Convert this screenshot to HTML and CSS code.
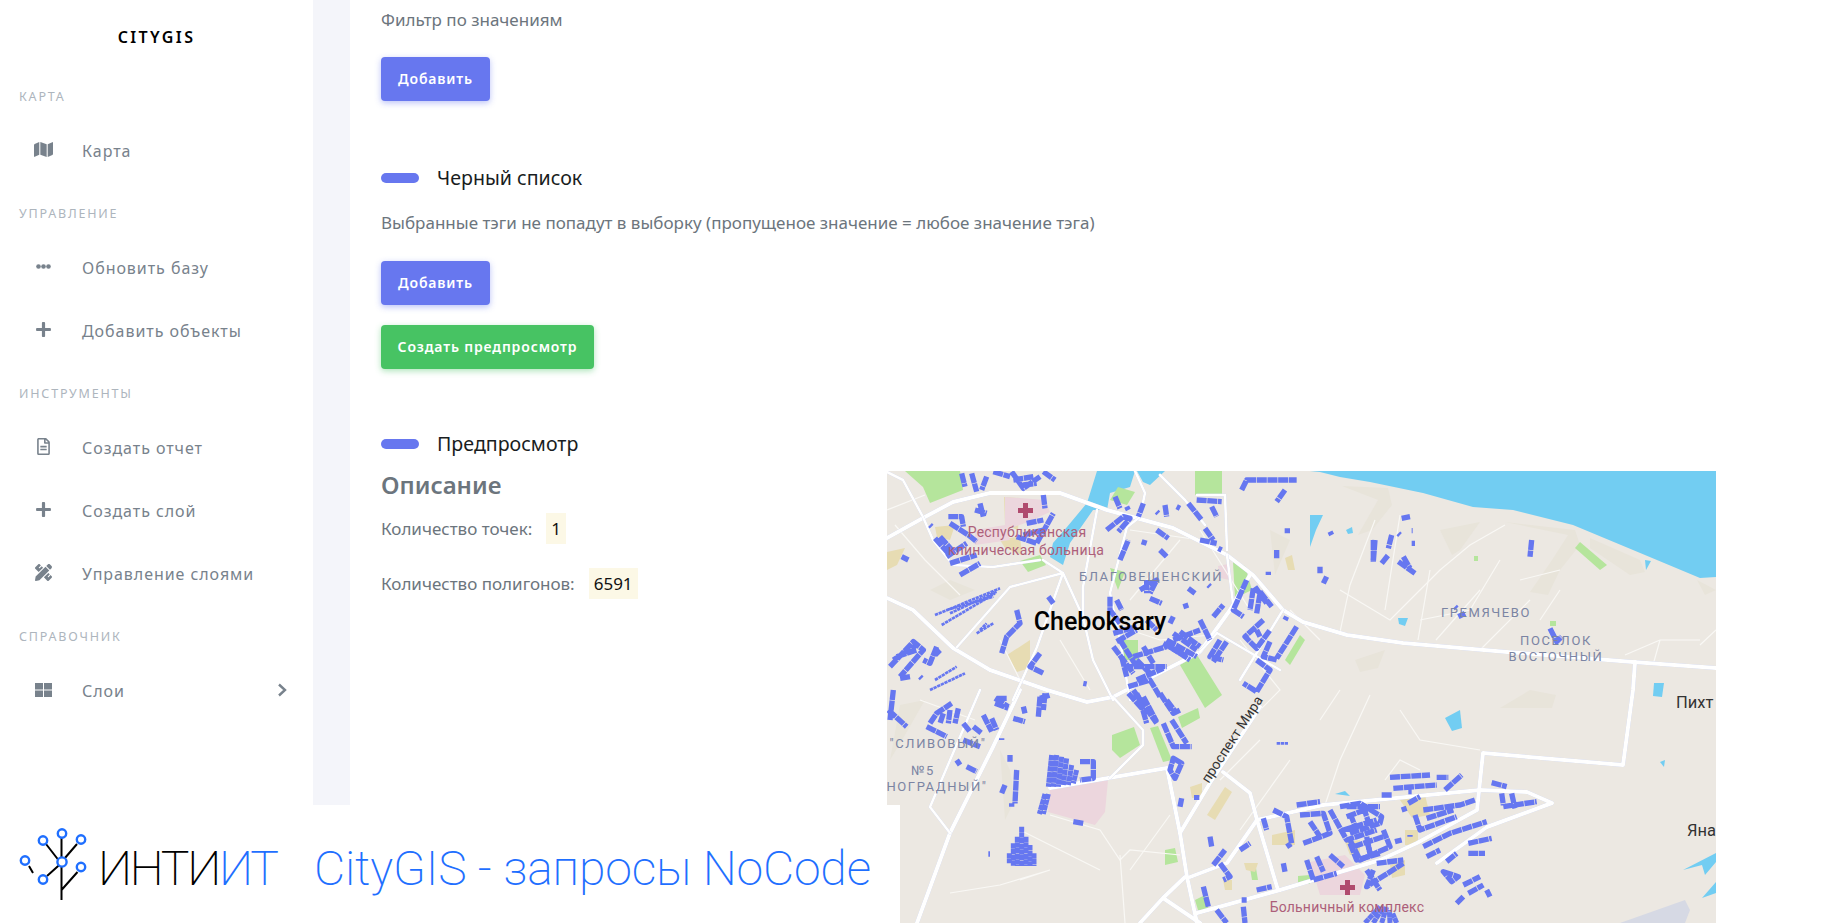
FILE: index.html
```html
<!DOCTYPE html>
<html lang="ru">
<head>
<meta charset="utf-8">
<title>CityGIS</title>
<link rel="stylesheet" href="styles.css">
</head>
<body>
<div class="app">
  <aside class="sidebar">
    <div class="brand">CITYGIS</div>
    <div class="menu-label">Карта</div>
    <a class="menu-item"><span class="ico"><svg class="i-map" viewBox="0 0 576 512"><path d="M0 117.66v346.32c0 11.32 11.43 19.06 21.94 14.86L160 416V32L20.12 87.95A32.006 32.006 0 0 0 0 117.66zM192 416l192 64V96L192 32v384zM554.06 33.16L416 96v384l139.88-55.95A31.996 31.996 0 0 0 576 394.34V48.02c0-11.32-11.43-19.06-21.94-14.86z"/></svg></span>Карта</a>
    <div class="menu-label">Управление</div>
    <a class="menu-item"><span class="ico"><svg class="i-dots" viewBox="0 0 15 5"><circle cx="2.5" cy="2.5" r="2.3"/><circle cx="7.5" cy="2.5" r="2.3"/><circle cx="12.5" cy="2.5" r="2.3"/></svg></span>Обновить базу</a>
    <a class="menu-item"><span class="ico"><svg class="i-plus" viewBox="0 0 448 512"><path d="M416 208H272V64c0-17.67-14.33-32-32-32h-32c-17.67 0-32 14.33-32 32v144H32c-17.67 0-32 14.33-32 32v32c0 17.67 14.33 32 32 32h144v144c0 17.67 14.33 32 32 32h32c17.67 0 32-14.33 32-32V304h144c17.67 0 32-14.33 32-32v-32c0-17.67-14.33-32-32-32z"/></svg></span>Добавить объекты</a>
    <div class="menu-label">Инструменты</div>
    <a class="menu-item"><span class="ico"><svg class="i-file" viewBox="0 0 384 512"><path d="M288 248v28c0 6.6-5.4 12-12 12H108c-6.6 0-12-5.4-12-12v-28c0-6.6 5.4-12 12-12h168c6.6 0 12 5.4 12 12zm-12 72H108c-6.6 0-12 5.4-12 12v28c0 6.6 5.4 12 12 12h168c6.6 0 12-5.4 12-12v-28c0-6.6-5.4-12-12-12zm108-188.1V464c0 26.5-21.5 48-48 48H48c-26.5 0-48-21.5-48-48V48C0 21.5 21.5 0 48 0h204.1C264.8 0 277 5.1 286 14.1L369.9 98c9 8.9 14.1 21.2 14.1 33.9zm-128-80V128h76.1L256 51.9zM336 464V176H232c-13.3 0-24-10.7-24-24V48H48v416h288z"/></svg></span>Создать отчет</a>
    <a class="menu-item"><span class="ico"><svg class="i-plus" viewBox="0 0 448 512"><path d="M416 208H272V64c0-17.67-14.33-32-32-32h-32c-17.67 0-32 14.33-32 32v144H32c-17.67 0-32 14.33-32 32v32c0 17.67 14.33 32 32 32h144v144c0 17.67 14.33 32 32 32h32c17.67 0 32-14.33 32-32V304h144c17.67 0 32-14.33 32-32v-32c0-17.67-14.33-32-32-32z"/></svg></span>Создать слой</a>
    <a class="menu-item"><span class="ico"><svg class="i-tools" viewBox="0 0 512 512"><path d="M109.46 244.04l134.58-134.56-44.12-44.12-61.68 61.68a7.919 7.919 0 0 1-11.21 0l-11.21-11.21c-3.1-3.1-3.1-8.12 0-11.21l61.68-61.68-33.64-33.65C131.47-3.1 111.39-3.1 99 9.29L9.29 99c-12.38 12.39-12.39 32.47 0 44.86l100.17 100.18zm388.47-116.8c18.76-18.76 18.75-49.17 0-67.93l-45.25-45.25c-18.76-18.76-49.18-18.76-67.95 0l-46.02 46.01 113.2 113.2 46.02-46.03zM316.08 82.71l-297 296.96L.32 487.11c-2.53 14.49 10.09 27.11 24.59 24.56l107.45-18.84L429.28 195.9 316.08 82.71zm186.63 285.43l-33.64-33.64-61.68 61.68c-3.1 3.1-8.12 3.1-11.21 0l-11.21-11.21c-3.09-3.1-3.09-8.12 0-11.21l61.68-61.68-44.14-44.14L267.93 402.5l100.21 100.2c12.39 12.39 32.47 12.39 44.86 0l89.71-89.7c12.39-12.39 12.39-32.47 0-44.86z"/></svg></span>Управление слоями</a>
    <div class="menu-label">Справочник</div>
    <a class="menu-item"><span class="ico"><svg class="i-grid" viewBox="0 0 17 14"><rect width="8" height="6.5"/><rect x="9" width="8" height="6.5"/><rect y="7.5" width="8" height="6.5"/><rect x="9" y="7.5" width="8" height="6.5"/></svg></span>Слои<svg class="chev" viewBox="0 0 10 14"><path d="M2 1.5 L8 7 L2 12.5"/></svg></a>
  </aside>

  <div class="gutter">
    <main class="card">
      <p class="muted first">Фильтр по значениям</p>
      <button class="btn primary">Добавить</button>

      <h3 class="section-title black-title">Черный список</h3>
      <p class="muted desc">Выбранные тэги не попадут в выборку (пропущеное значение = любое значение тэга)</p>
      <button class="btn primary add">Добавить</button>
      <button class="btn success">Создать предпросмотр</button>

      <h3 class="section-title preview-title">Предпросмотр</h3>
      <section class="preview">
        <div class="summary">
          <h2>Описание</h2>
          <div class="stat"><span>Количество точек:</span><b>1</b></div>
          <div class="stat"><span>Количество полигонов:</span><b>6591</b></div>
        </div>
        <svg class="map" viewBox="887 471 829 452" preserveAspectRatio="none">
          <rect class="land" x="887" y="471" width="829" height="452"/>

          <!-- hills -->
          <g class="hill">
            <path d="M1342 486 L1388 488 L1392 505 L1372 530 L1358 535 L1378 500 Z"/>
            <path d="M1440 530 L1480 522 L1460 550 L1452 555 Z"/>
            <path d="M1505 522 L1575 530 L1580 545 L1560 570 L1548 595 L1530 592 L1552 560 L1568 535 Z"/>
            <path d="M1590 538 L1640 560 L1645 572 L1630 575 L1590 548 Z"/>
            <path d="M1697 580 L1716 590 L1705 595 Z"/>
            <path d="M1556 695 L1552 708 L1500 708 L1530 690 Z"/>
            <path d="M1355 660 L1385 650 L1378 668 L1360 672 Z"/>
            <path d="M900 705 L925 700 L905 735 L890 760 Z"/>
            <path d="M1000 750 L1010 770 L1015 800 L1005 820 Z"/>
            <path d="M930 590 L950 580 L975 590 L950 600 Z"/>
            <path d="M1270 530 L1290 540 L1275 575 Z"/>
          </g>

          <!-- water -->
          <g class="water">
            <path d="M1310 471 L1320 472 L1340 477 L1370 482 L1423 493 L1473 507 L1513 510 L1573 525 L1633 550 L1700 578 L1716 577 L1716 471 Z"/>
            <path d="M1097 471 L1087 503 L1067 527 L1053 543 L1050 557 L1063 565 L1070 543 L1093 510 L1107 510 L1110 493 L1130 487 L1135 471 Z"/>
            <path d="M1137 471 L1165 471 L1150 485 L1143 482 Z"/>
            <path d="M1310 515 L1323 515 L1316 530 L1310 547 Z"/>
            <path d="M1346 530 L1352 527 L1353 533 L1348 534 Z"/>
            <path d="M1645 560 L1651 561 L1646 570 Z"/>
            <path d="M1398 618 L1408 618 L1405 626 L1399 624 Z"/>
            <path d="M1654 683 L1664 683 L1662 697 L1653 696 Z"/>
            <path d="M1445 718 L1460 710 L1462 728 L1452 731 Z"/>
            <path d="M1660 762 L1665 760 L1664 767 Z"/>
            <path d="M1683 870 L1716 853 L1716 862 L1705 875 L1702 865 Z"/>
            <path d="M1702 898 L1716 882 L1716 893 Z"/>
            <path d="M1335 794 L1345 791 L1350 796 Z"/>
          </g>

          <!-- parks and plots -->
          <g class="green">
            <path d="M905 471 L960 471 L963 490 L930 503 L923 487 Z"/>
            <path d="M1020 561 L1040 555 L1046 565 L1028 572 Z"/>
            <path d="M1195 471 L1222 471 L1222 495 L1195 495 Z"/>
            <path d="M1233 562 L1245 566 L1252 590 L1235 598 Z"/>
            <path d="M1118 487 L1135 492 L1127 505 L1110 500 Z"/>
            <path d="M1180 665 L1197 655 L1222 695 L1205 708 Z"/>
            <path d="M1110 568 L1125 572 L1118 590 Z"/>
            <path d="M1120 640 L1138 640 L1138 660 L1125 660 Z"/>
            <path d="M1300 635 L1305 640 L1290 665 L1285 660 Z"/>
            <path d="M1112 735 L1134 727 L1140 745 L1120 758 L1112 750 Z"/>
            <path d="M1150 728 L1158 726 L1172 760 L1163 762 Z"/>
            <path d="M1178 717 L1198 708 L1200 718 L1182 728 Z"/>
            <path d="M1165 850 L1175 848 L1178 862 L1165 865 Z"/>
            <path d="M1195 900 L1205 895 L1209 910 L1198 910 Z"/>
            <path d="M1580 542 L1607 565 L1600 570 L1575 548 Z"/>
            <path d="M1474 556 L1478 556 L1478 561 L1474 561 Z"/>
            <path d="M1550 621 L1556 621 L1556 626 L1550 626 Z"/>
            <path d="M1298 876 L1310 875 L1310 884 L1298 884 Z"/>
            <path d="M1250 868 L1256 868 L1258 880 L1252 880 Z"/>
          </g>
          <g class="tan">
            <path d="M1004 497 L1020 498 L1018 530 L1005 525 Z"/>
            <path d="M935 527 L955 525 L950 540 L937 537 Z"/>
            <path d="M1000 540 L1020 536 L1022 555 L1005 548 Z"/>
            <path d="M887 552 L905 548 L897 565 L887 570 Z"/>
            <path d="M1007 655 L1030 640 L1030 668 L1017 672 Z"/>
            <path d="M1285 558 L1292 555 L1295 570 L1288 570 Z"/>
            <path d="M1190 787 L1202 783 L1202 797 L1192 798 Z"/>
            <path d="M1207 815 L1225 787 L1232 792 L1215 820 Z"/>
            <path d="M1244 863 L1258 863 L1255 872 L1246 870 Z"/>
            <path d="M1223 880 L1232 880 L1232 890 L1225 890 Z"/>
            <path d="M1272 835 L1295 830 L1295 845 L1272 845 Z"/>
            <path d="M1345 842 L1360 840 L1360 855 L1350 855 Z"/>
            <path d="M1400 800 L1425 795 L1430 815 L1412 818 Z"/>
            <path d="M1405 830 L1418 830 L1418 845 L1405 845 Z"/>
            <path d="M1390 865 L1405 860 L1405 875 L1392 878 Z"/>
          </g>
          <g class="pink">
            <path d="M1005 497 L1045 500 L1050 512 L1028 522 L1005 530 Z"/>
            <path d="M975 530 L1005 525 L1010 540 L975 545 Z"/>
            <path d="M1050 790 L1108 780 L1105 812 L1095 825 L1048 812 Z"/>
            <path d="M1310 862 L1345 855 L1365 875 L1360 895 L1320 895 Z"/>
            <path d="M1218 566 L1228 564 L1230 580 L1220 578 Z"/>
          </g>
          <path class="runway" d="M1620 923 L1685 900 L1690 910 L1685 923 Z"/>

          <!-- minor roads -->
          <g class="minor">
            <path d="M887 510 L925 495 M895 525 L925 560 L960 595"/>
            <path d="M1200 530 L1250 610 M1100 620 L1160 640 L1210 635"/>
            <path d="M1375 520 L1350 585 L1340 632 M1290 610 L1320 640 M1400 515 L1385 610"/>
            <path d="M1340 590 L1390 620 L1420 590 L1440 570 L1470 545 L1505 525"/>
            <path d="M1430 570 L1418 640 M1500 560 L1470 610 L1420 620 M1480 590 L1436 640"/>
            <path d="M1520 580 L1560 570 M1540 620 L1560 590 M1480 650 L1530 600"/>
            <path d="M1660 640 L1700 640 M1625 655 L1660 640 M1660 640 L1653 665 M1700 645 L1716 630"/>
            <path d="M1050 815 L1100 830 L1120 860 L1130 850 L1180 855 M1020 830 L1100 870"/>
            <path d="M1130 870 L1170 815 M1120 855 L1125 923 M1020 880 L1050 870 L1000 885 L950 893"/>
            <path d="M1220 780 L1260 740 M1290 760 L1240 830 M1320 720 L1340 690 M1370 695 L1340 760 L1325 805"/>
            <path d="M1400 710 L1420 740 L1480 750 M1385 780 L1400 760 L1420 770"/>
            <path d="M1000 640 L1020 680 M1060 640 L1090 690 M920 700 L975 720"/>
            <path d="M1180 540 L1130 600 M1130 530 L1200 540"/>
            <path d="M1240 640 L1280 690 L1250 720"/>
          </g>

          <!-- major roads -->
          <g class="roads">
            <path d="M887 538 L923 518 L953 502 L990 493 L1060 493 L1107 510 L1173 528 L1227 555 L1253 575 L1283 610 L1303 622 L1347 635 L1403 643 L1507 652 L1633 662 L1716 668"/>
            <path d="M887 598 L913 610 L953 648 L990 670 L1047 690 L1087 702 L1113 697 L1200 652 L1230 610 L1250 575"/>
            <path d="M1260 707 L1210 783 L1180 833"/>
            <path d="M1050 788 L1167 768 L1180 833 L1187 877 L1197 923"/>
            <path d="M1197 913 L1280 890 L1380 860 L1417 843 L1477 810 L1483 753 L1623 765 L1633 690 L1635 662"/>
            <path d="M1190 877 L1227 863 L1257 820 L1323 805 L1480 790 L1527 792 L1552 803 L1487 827 L1437 863"/>
            <path d="M1223 772 L1250 793 L1257 820 L1278 890"/>
            <path d="M1140 923 L1163 898 L1185 877 M1163 898 L1200 923"/>
            <path d="M917 923 L950 833 L993 747 L1020 690"/>
          </g>
          <g class="roads narrow">
            <path d="M1113 697 L1143 730 L1143 745 L1110 778"/>
            <path d="M980 690 L930 807 L950 833"/>
            <path d="M887 472 L903 480 L923 517 L933 540 L953 565 L993 567 L1040 560"/>
            <path d="M1135 471 L1145 493 L1140 517 L1127 527 L1110 593 L1120 640 L1130 700"/>
            <path d="M1097 510 L1083 587 L1083 620"/>
            <path d="M1063 573 L1043 560 M1063 573 L1010 587 L957 647 M1063 573 L1037 647 L1013 700 M1063 573 L1083 617 L1093 660 L1113 700"/>
            <path d="M1227 555 L1233 603 M1217 633 L1280 670 M1200 652 L1217 633"/>
            <path d="M1283 610 L1240 680"/>
            <path d="M1160 475 L1185 500 L1205 525"/>
            <path d="M1197 495 L1225 495 L1227 550"/>
          </g>

          <!-- buildings, traced from the reference -->
          <g transform="translate(880 460) scale(.33333)" class="bld">
            <path d="M245,40 L255,80 M275,40 L290,95 M320,50 L305,90 M340,35 L390,50 M395,35 L430,85 L480,50 M490,35 L525,60 M430,75 L470,70 M400,60 L460,50"/>
            <path d="M205,170 L245,170 L250,200 M210,190 L265,225 L290,245 M300,130 L310,170 M285,150 L320,160 M165,235 L205,280 M180,230 L220,275 M200,290 L260,250 M210,310 L290,285 M240,345 L300,310 M65,290 L85,300 M150,195 L155,200"/>
            <path d="M410,230 L470,250 L520,160 M440,190 L490,180 M490,105 L495,145 M430,225 L490,210"/>
            <path d="M705,110 L720,145 M680,210 L730,170 L750,175 L715,215 M790,130 L775,170 M740,140 L745,150 M830,155 L835,160 M855,135 L860,170 M890,140 L900,145 M925,130 L965,180 M950,120 L1025,125 M995,140 L1010,170 M975,205 L1000,240 M960,240 L1010,250 M1015,265 L1025,270"/>
            <path d="M720,300 L745,240 M785,245 L800,250 M830,210 L865,235 M840,270 L860,290"/>
            <path d="M1085,90 L1100,60 L1250,60 M1215,90 L1190,125 M1222,205 L1222,220 M1190,270 L1190,295 M1350,215 L1355,225 M1480,240 L1480,305 M1320,320 L1320,340 M1165,335 L1165,345 M1340,350 L1330,370"/>
            <path d="M780,390 L830,360 L810,400 M800,360 L800,400 M925,385 L945,400 M985,375 L990,380 M915,430 L920,445 M1000,470 L1030,435 M690,410 L690,450 L720,490 M710,420 L725,450 M810,415 L845,430"/>
            <path d="M710,545 L770,510 M800,480 L830,510 M870,490 L880,470 M880,540 L960,510 M850,550 L920,590 M900,515 L960,560 M960,480 L990,540 M725,590 L740,650 M770,600 L810,640 M730,620 L860,620 M745,680 L810,660 L840,710 M770,700 L780,720"/>
            <path d="M700,560 L760,640 M720,540 L770,620 M860,540 L950,590 M870,560 L930,600 M880,520 L950,570 M760,590 L860,560 M700,520 L770,500 M770,660 L850,625 M790,560 L820,610"/>
            <path d="M1100,360 L1060,450 L1090,470 M1120,385 L1110,450 M1140,395 L1175,440 M1140,400 L1130,460 M1125,380 L1160,430 M1150,480 L1095,530 L1130,565 L1170,510 M1130,510 L1140,530 M1170,545 L1150,590 L1190,600 M1250,500 L1190,595 M1220,470 L1215,480 M1020,540 L990,590 L1030,600 M1040,545 L1000,605 M1130,600 L1170,630 L1130,695 L1090,670"/>
            <path d="M30,620 L100,545 L130,570 L60,650 M50,590 L110,570 M40,600 L110,555 M90,650 L60,655 M120,650 L125,655 M170,560 L150,610 L130,600 M180,570 L165,585"/>
            <path d="M410,450 L420,490 L380,530 L365,580 M480,580 L450,620 L490,640 M350,715 L380,715 M480,715 L510,705 M505,410 L520,430 M610,670 L620,672"/>
            <path class="thin" d="M165,465 L360,385 M185,495 L345,400 M200,450 L340,410 M210,460 L350,395 M290,520 L340,490 M300,510 L320,490 M165,660 L230,620 M150,690 L255,640"/>
          </g>
          <g transform="translate(880 690) scale(.33333)" class="bld">
            <path d="M25,60 L80,110 M40,0 L30,90 M150,100 L170,70 L215,40 M190,70 L180,100 M210,60 L205,100 M235,55 L225,100 M250,100 L270,125 M280,110 L305,130 M140,110 L200,140 M250,150 L300,170 M310,75 L335,125 M335,85 L350,120 M345,25 L385,50 M345,40 L385,55 M480,20 L475,80 M495,10 L490,60 M430,50 L435,70 M400,85 L435,95 M365,145 L365,150"/>
            <path d="M390,195 L390,215 M230,210 L240,225 M260,230 L290,245 M410,240 L405,340 M395,340 L395,350 M375,285 L365,310 M600,215 L640,215 L640,265 L600,270 M580,395 L610,400 M325,492 L330,492"/>
            <path class="hatch" d="M515,195 L505,290 M530,195 L520,290 M545,200 L535,290 M560,205 L550,285 M575,225 L565,285 M590,240 L580,280 M495,312 L478,372 M505,312 L490,372 M425,410 L425,528 M412,440 L412,528 M400,460 L400,528 M388,490 L388,520 M438,440 L438,528 M450,465 L450,528 M462,490 L462,528"/>
            <path d="M745,10 L790,60 M790,20 L830,95 M760,0 L830,100 M780,30 L800,100 M840,10 L880,70 L900,60 M860,30 L890,70 M850,100 L880,170 L935,170 M875,90 L920,160 M880,205 L905,220 L885,265 L870,240 Z M905,325 L900,350 M950,315 L950,330 M990,440 L995,470 M1080,480 L1110,460 M1000,525 L1035,480 M1020,520 L1050,560 L1030,570 M970,590 L985,650 M1130,600 L1175,590 M1085,630 L1100,630 M1010,660 L1040,699 M1090,650 L1095,699"/>
            <path d="M1150,385 L1160,420 M1180,360 L1220,380 L1235,460 L1220,470 M1250,345 L1320,335 M1260,375 L1330,370 L1350,430 L1270,460 M1290,395 L1320,440 M1280,510 L1300,570 L1370,550 M1310,500 L1330,545 M1350,495 L1390,530 M1350,360 L1400,450 L1490,420 M1400,350 L1500,350 M1410,460 L1430,510 L1500,490 M1460,450 L1470,490 M1460,540 L1500,600 M1210,520 L1215,545"/>
            <path class="thin" d="M1190,160 L1225,160"/>
          </g>
          <g transform="translate(1340 690) scale(.33333)" class="bld">
            <path d="M150,262 L270,255 M290,262 L325,262 M160,295 L290,285 M315,300 L365,255 M125,315 L155,315 M205,305 L215,305 M455,278 L500,290 M485,310 L490,345 M515,310 L525,355 M490,350 L590,335 M185,360 L200,355 M205,340 L240,320 M250,360 L360,345 L405,330 M225,375 L240,420 L350,380 M260,385 L340,360 M165,455 L185,450 M210,435 L210,440"/>
            <path d="M0,350 L60,340 L125,380 L120,400 L30,430 M30,370 L50,420 M70,350 L90,410 M20,380 L100,350 M10,420 L110,390 M30,450 L60,510 L150,470 L130,420 M80,440 L90,490 M40,470 L130,440 M100,540 L80,590 L190,520 M110,520 L190,510 M250,470 L330,430 L440,395 M260,500 L300,480 M320,515 L350,490 M385,460 L455,445 M385,490 L435,490 M310,545 L355,560 L335,575 Z M370,585 L420,560 M385,610 L430,585 M440,600 L450,620 M350,640 L370,620"/>
            <path class="hatch" d="M75,699 L120,650 M100,699 L130,650 M125,699 L140,650 M150,699 L148,660 M170,699 L158,670"/>
          </g>
          <g transform="translate(1340 460) scale(.33333)" class="bld">
            <path d="M105,240 L100,305 M155,225 L145,265 M125,310 L145,285 M175,220 L180,225 M175,305 L225,340 M190,290 L210,325 M185,175 L210,170 M215,212 L218,212 M215,250 L225,250 M575,240 L570,290 M355,470 L375,460 M345,440 L350,445 M630,505 L650,545 L665,530"/>
          </g>

          <!-- hospital crosses -->
          <path class="cross" d="M1023 503 h5 v5 h5 v5 h-5 v5 h-5 v-5 h-5 v-5 h5 z"/>
          <path class="cross" d="M1345 880 h5 v5 h5 v5 h-5 v5 h-5 v-5 h-5 v-5 h5 z"/>

          <!-- labels -->
          <text class="lb-poi" x="1027" y="537">Республиканская</text>
          <text class="lb-poi" x="1026" y="555">клиническая больница</text>
          <text class="lb-poi" x="1347" y="912">Больничный комплекс</text>
          <text class="lb-town" x="1151" y="581">БЛАГОВЕЩЕНСКИЙ</text>
          <text class="lb-town" x="1486" y="617">ГРЕМЯЧЕВО</text>
          <text class="lb-town" x="1556" y="645">ПОСЕЛОК</text>
          <text class="lb-town" x="1556" y="661">ВОСТОЧНЫЙ</text>
          <text class="lb-town" x="938" y="748">"СЛИВОВЫЙ"</text>
          <text class="lb-town" x="923" y="775">№5</text>
          <text class="lb-town" x="937" y="791">НОГРАДНЫЙ"</text>
          <text class="lb-city" x="1100" y="630">Cheboksary</text>
          <text class="lb-vil" x="1676" y="708">Пихт</text>
          <text class="lb-vil" x="1687" y="836">Яна</text>
          <text class="lb-street" transform="translate(1236 742) rotate(-57)">проспект Мира</text>
        </svg>
      </section>
    </main>
  </div>

  <footer class="overlay">
    <svg class="logo" viewBox="0 0 70 80">
      <path class="lg-b" d="M43.5 72 L43.5 10 M43.5 36 L28 16 M43.5 34 L59 16 M43.5 62 L59.5 44 M43.5 35 L29 48 M11 38 L15 45"/>
      <g class="lg-c">
        <circle cx="44" cy="5.5" r="4.2"/><circle cx="25" cy="12.5" r="4.2"/><circle cx="63" cy="11.5" r="4.2"/>
        <circle cx="7" cy="32.5" r="4.2"/><circle cx="44" cy="34" r="4.6"/><circle cx="63" cy="39" r="4.2"/>
        <circle cx="25" cy="51.5" r="4.2"/>
      </g>
    </svg>
    <span class="wordmark">ИНТИ<em>ИТ</em></span>
    <span class="tagline">CityGIS - запросы NoCode</span>
  </footer>
</div>
</body>
</html>
```

FILE: styles.css
```css
* { box-sizing: border-box; }
html, body { margin: 0; height: 100%; }
body { background: #fff; font-family: "Noto Sans", sans-serif; overflow: hidden; }

.app { position: relative; display: flex; height: 923px; overflow: hidden; }

/* sidebar */
.sidebar { width: 313px; flex: none; background: #fff; }
.brand {
  height: 66px; padding-top: 26px;
  text-align: center; font-size: 16px; line-height: 22px; font-weight: 600;
  letter-spacing: 2.4px; color: #000;
}
.menu-label {
  height: 54px; padding: 21px 0 13px 19px;
  font-size: 12.5px; line-height: 20px; letter-spacing: 1.8px;
  text-transform: uppercase; color: #adb5bd;
}
.menu-item {
  display: flex; align-items: center; height: 63px; padding-bottom: 2px;
  font-size: 16px; letter-spacing: .95px; color: #78828c;
}
.ico { width: 82px; padding-left: 33px; padding-right: 28px; flex: none; display: flex; justify-content: center; }
.ico svg { fill: #78828c; display: block; margin-top: -2px; }
.i-map { width: 19px; height: 17px; }
.i-dots { width: 15px; height: 5px; }
.i-plus { width: 15px; height: 17px; }
.i-file { width: 13px; height: 17px; }
.i-tools { width: 17px; height: 17px; }
.i-grid { width: 17px; height: 14px; }
.chev { width: 10px; height: 14px; margin-left: auto; margin-right: 26px; margin-top: -2px; fill: none; stroke: #78828c; stroke-width: 2.4; }

/* main */
.gutter { flex: 1; min-width: 0; background: #f4f5fa; padding-left: 37px; }
.card { height: 923px; background: #fff; padding: 8px 0 0 31px; }
.muted { margin: 0; font-size: 17px; line-height: 24px; color: #6c757d; }
.btn {
  display: block; height: 44px; padding: 0; border: 0; border-radius: 4px; text-align: center;
  font: 600 14px/44px "Noto Sans", sans-serif; letter-spacing: .85px; color: #fff;
}
.primary { width: 109px; background: #6777ef; box-shadow: 0 2px 6px rgba(103,119,239,.45); }
.success { width: 213px; background: #47c363; box-shadow: 0 2px 6px rgba(71,195,99,.45); margin-top: 20px; }
.first + .btn { margin-top: 25px; }
.add { margin-top: 26px; }
.section-title {
  display: flex; align-items: center; gap: 18px; margin: 0;
  font-size: 19.6px; line-height: 30px; font-weight: 400; color: #191d21;
}
.section-title::before { content: ""; width: 38px; height: 10px; border-radius: 5px; background: #6777ef; }
.black-title { margin-top: 62px; }
.desc { margin-top: 18px; }
.preview-title { margin-top: 60px; }

.preview { display: flex; margin-top: 12px; }
.summary { width: 506px; flex: none; }
.summary h2 { margin: -1px 0 13px; font-size: 24px; line-height: 30px; font-weight: 600; color: #6c757d; }
.stat { display: flex; align-items: center; height: 31px; margin-bottom: 24px; gap: 14px; font-size: 17px; color: #6c757d; }
.stat b { height: 31px; padding: 0 5px; font-weight: 400; line-height: 31px; color: #111; background: #fcf8e6; }

/* map */
.map { width: 829px; height: 452px; flex: none; display: block; }
.land { fill: #ece8e2; }
.hill { fill: #e8e4da; }
.water { fill: #72cdf2; }
.green { fill: #b5e59c; }
.tan { fill: #e7dcb3; }
.pink { fill: #ecd6dd; }
.runway { fill: #d6d9e4; }
.minor { fill: none; stroke: #f9f8f5; stroke-width: 1.2; }
.roads { fill: none; stroke: #fff; stroke-width: 4; stroke-linejoin: round; stroke-linecap: round; filter: drop-shadow(0 0 .7px #b9c3e6); }
.roads.narrow { stroke-width: 2.6; }
.bld path { fill: none; stroke: #6677f0; stroke-width: 16; stroke-dasharray: 30 2; stroke-linejoin: round; }
.bld .thin { stroke-width: 8; stroke-dasharray: 10 2; }
.bld .hatch { stroke-width: 15; stroke-dasharray: 16 1; }
.cross { fill: #b04a6e; }
.map text { font-family: Roboto, sans-serif; text-anchor: middle; }
.lb-poi { font-size: 14px; fill: #ad5f7a; letter-spacing: .2px; }
.lb-town { font-size: 13px; fill: #7b84a3; letter-spacing: 1.6px; }
.lb-city { font-size: 25px; fill: #000; font-weight: 500; }
.map .lb-vil { font-size: 16.5px; fill: #333; text-anchor: start; }
.map .lb-street { font-size: 14px; fill: #333; }

/* overlay banner */
.overlay {
  position: absolute; left: 0; top: 805px; width: 900px; height: 118px;
  background: #fff; display: flex; align-items: flex-start;
  padding-left: 18px; font-family: Roboto, sans-serif; font-weight: 200; font-size: 48px; line-height: 56px;
}
.logo { width: 70px; height: 80px; flex: none; margin-top: 23px; }
.lg-b { fill: none; stroke: #000; stroke-width: 2; }
.lg-c circle { fill: #fff; stroke: #1f6fff; stroke-width: 2.4; }
.wordmark { margin: 36px 0 0 10px; color: #000; letter-spacing: -2.2px; width: 216px; flex: none; }
.wordmark em { font-style: normal; color: #1f6fff; }
.tagline { margin-top: 36px; color: #1f6fff; white-space: nowrap; letter-spacing: -.15px; }
```
